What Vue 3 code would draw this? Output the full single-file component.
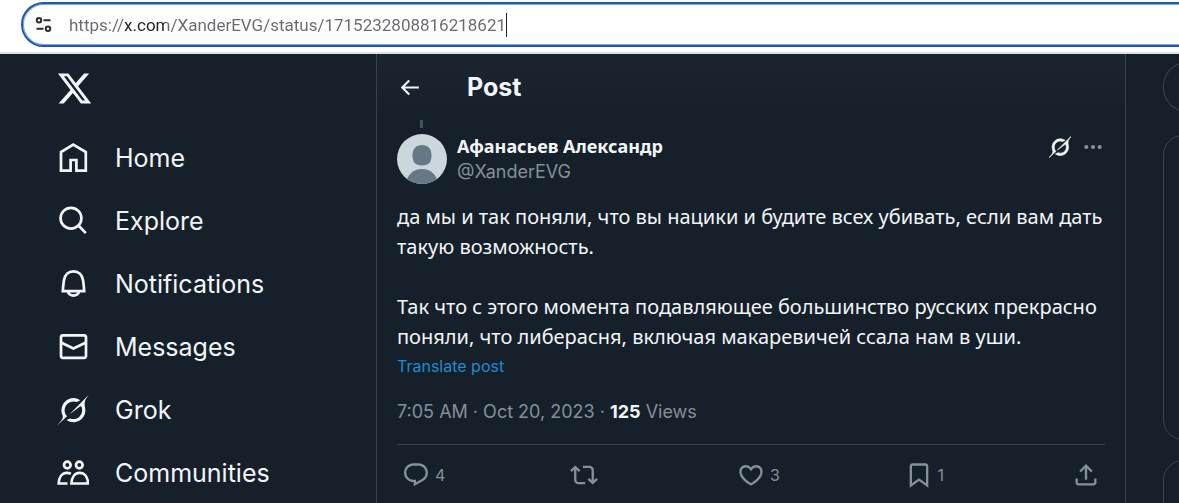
<script setup>
import { ref } from 'vue'

const url = ref('https://x.com/XanderEVG/status/1715232808816218621')

const nav = [
  { label: 'Home', icon: 'home' },
  { label: 'Explore', icon: 'search' },
  { label: 'Notifications', icon: 'bell' },
  { label: 'Messages', icon: 'mail' },
  { label: 'Grok', icon: 'grok' },
  { label: 'Communities', icon: 'people' },
]

const grokPath =
  'M12.745 20.54l10.97-8.19c.539-.4 1.307-.244 1.564.38 1.349 3.288.746 7.241-1.938 9.955-2.683 2.714-6.417 3.31-9.83 1.954l-3.728 1.745c5.347 3.697 11.84 2.782 15.898-1.324 3.219-3.255 4.216-7.692 3.284-11.693l.008.009c-1.351-5.878.332-8.227 3.782-13.031L33 0l-4.54 4.59v-.014L12.743 20.544m-2.263 1.987c-3.837-3.707-3.175-9.446.1-12.755 2.42-2.449 6.388-3.448 9.852-1.979l3.72-1.737c-.67-.49-1.53-1.017-2.515-1.387-4.455-1.854-9.789-.931-13.41 2.728-3.483 3.523-4.579 8.94-2.697 13.561 1.405 3.454-.899 5.898-3.22 8.364C1.49 30.2.666 31.074 0 32l10.478-9.466'

const actions = [
  {
    label: 'Reply',
    count: '4',
    path: 'M1.751 10c0-4.42 3.584-8 8.005-8h4.366c4.49 0 8.129 3.64 8.129 8.13 0 2.96-1.607 5.68-4.196 7.11l-8.054 4.46v-3.69h-.067c-4.49.1-8.183-3.51-8.183-8.01zm8.005-6c-3.317 0-6.005 2.69-6.005 6 0 3.37 2.77 6.08 6.138 6.01l.351-.01h1.761v2.3l5.087-2.81c1.951-1.08 3.163-3.13 3.163-5.36 0-3.39-2.744-6.13-6.129-6.13H9.756z',
  },
  {
    label: 'Repost',
    count: '',
    path: 'M4.5 3.88l4.432 4.14-1.364 1.46L5.5 7.55V16c0 1.1.896 2 2 2H13v2H7.5c-2.209 0-4-1.79-4-4V7.55L1.432 9.48.068 8.02 4.5 3.88zM16.5 6H11V4h5.5c2.209 0 4 1.79 4 4v8.45l2.068-1.93 1.364 1.46-4.432 4.14-4.432-4.14 1.364-1.46 2.068 1.93V8c0-1.1-.896-2-2-2z',
  },
  {
    label: 'Like',
    count: '3',
    path: 'M16.697 5.5c-1.222-.06-2.679.51-3.89 2.16l-.805 1.09-.806-1.09C9.984 6.01 8.526 5.44 7.304 5.5c-1.243.07-2.349.78-2.91 1.91-.552 1.12-.633 2.78.479 4.82 1.074 1.97 3.257 4.27 7.129 6.61 3.87-2.34 6.052-4.64 7.126-6.61 1.111-2.04 1.03-3.7.477-4.82-.561-1.13-1.666-1.84-2.908-1.91zm4.187 7.69c-1.351 2.48-4.001 5.12-8.379 7.67l-.503.3-.504-.3c-4.379-2.55-7.029-5.19-8.382-7.67-1.36-2.5-1.41-4.86-.514-6.67.887-1.79 2.647-2.91 4.601-3.01 1.651-.09 3.368.56 4.798 2.01 1.429-1.45 3.146-2.1 4.796-2.01 1.954.1 3.714 1.22 4.601 3.01.896 1.81.846 4.17-.514 6.67z',
  },
  {
    label: 'Bookmark',
    count: '1',
    path: 'M4 4.5C4 3.12 5.119 2 6.5 2h11C18.881 2 20 3.12 20 4.5v18.44l-8-5.71-8 5.71V4.5zM6.5 4c-.276 0-.5.22-.5.5v14.56l6-4.29 6 4.29V4.5c0-.28-.224-.5-.5-.5h-11z',
  },
  {
    label: 'Share',
    count: '',
    path: 'M12 2.59l5.7 5.7-1.41 1.42L13 6.41V16h-2V6.41l-3.3 3.3-1.41-1.42L12 2.59zM21 15l-.02 3.51c0 1.38-1.12 2.49-2.5 2.49H5.5C4.11 21 3 19.88 3 18.5V15h2v3.5c0 .28.22.5.5.5h12.98c.28 0 .5-.22.5-.5L19 15h2z',
  },
]
</script>

<template>
  <div class="window">
    <header class="toolbar">
      <div class="omnibox">
        <button class="site-info" type="button" aria-label="View site information">
          <svg width="18" height="18" viewBox="0 0 18 18" fill="none" stroke="#2b2d30" stroke-width="2">
            <circle cx="4" cy="4.3" r="2.2" />
            <path d="M8.5 4.3h7M1.5 12.7h7" />
            <circle cx="13" cy="12.7" r="2.2" />
          </svg>
        </button>
        <input v-model="url" class="url" type="text" aria-label="Address bar" spellcheck="false" />
        <span class="caret"></span>
      </div>
    </header>

    <div class="page">
      <nav class="sidebar" aria-label="Primary">
        <a class="logo" href="#" aria-label="X">
          <svg width="37" height="37" viewBox="0 0 24 24" fill="currentColor">
            <path d="M18.244 2.25h3.308l-7.227 8.26 8.502 11.24H16.17l-5.214-6.817L4.99 21.75H1.68l7.73-8.835L1.254 2.25H8.08l4.713 6.231zm-1.161 17.52h1.833L7.084 4.126H5.117z" />
          </svg>
        </a>
        <a v-for="item in nav" :key="item.label" class="nav-item" href="#">
          <svg v-if="item.icon === 'grok'" width="32" height="32" viewBox="0 0 33 32" fill="currentColor">
            <path :d="grokPath" />
          </svg>
          <svg v-else class="line" width="32" height="32" viewBox="0 0 32 32">
            <path v-if="item.icon === 'home'" d="M16.3 2.6L28.8 10v18.7h-9.4V18h-5.8v10.7H4V10z" />
            <template v-else-if="item.icon === 'search'">
              <circle cx="14" cy="13.2" r="10.4" />
              <path d="M21.5 20.5l7.3 7.6" />
            </template>
            <template v-else-if="item.icon === 'bell'">
              <path d="M5.8 23.2h21.4c-.2-4-.6-7.2-1.1-10.7-.8-5.5-4.5-9.2-9.6-9.2S7.7 7 6.9 12.5c-.5 3.5-.9 6.7-1.1 10.7z" />
              <path d="M11 23.5c.4 2.5 2.8 4.2 5.5 4.2s5.1-1.7 5.5-4.2" />
            </template>
            <template v-else-if="item.icon === 'mail'">
              <rect x="4" y="4.3" width="25" height="22.5" rx="2" />
              <path d="M4 11.5l12.4 6L29 11.5" />
            </template>
            <template v-else>
              <circle cx="10.3" cy="8" r="3.3" />
              <circle cx="22.3" cy="8" r="3.3" />
              <path d="M14.5 26.5H31c-.2-6.5-3.5-10.7-8.3-10.7s-8 4.2-8.2 10.7z" />
              <path d="M10.5 26.5H1.7c.2-6.5 3.5-10.7 8.2-10.7 1.5 0 2.8.3 3.9 1" />
            </template>
          </svg>
          <span>{{ item.label }}</span>
        </a>
      </nav>

      <main class="column">
        <div class="column-head">
          <button class="back" type="button" aria-label="Back">
            <svg width="25" height="25" viewBox="0 0 24 24" fill="currentColor">
              <path d="M7.414 13l5.043 5.04-1.414 1.42L3.586 12l7.457-7.46 1.414 1.42L7.414 11H21v2H7.414z" />
            </svg>
          </button>
          <h1>Post</h1>
        </div>

        <article class="post">
          <div class="thread-line"></div>
          <div class="author">
            <svg class="avatar" width="50" height="50" viewBox="0 0 50 50" aria-hidden="true">
              <rect width="50" height="50" fill="#ccd6dd" />
              <path d="M25 11c6 0 9.5 4 9.5 10.5S32 31.5 25 31.5s-9.5-3.5-9.5-10S19 11 25 11z" fill="#667788" />
              <path d="M9 50c1-9 7-15 16-15s15 6 16 15z" fill="#667788" />
            </svg>
            <div class="names">
              <a class="name" href="#">Афанасьев Александр</a>
              <a class="handle" href="#">@XanderEVG</a>
            </div>
            <div class="tools">
              <button class="grok" type="button" aria-label="Explain this post">
                <svg width="22" height="22" viewBox="0 0 33 32" fill="currentColor" stroke="currentColor" stroke-width="1"><path :d="grokPath" /></svg>
              </button>
              <button type="button" aria-label="More">
                <svg width="24" height="24" viewBox="0 0 24 24" fill="currentColor">
                  <circle cx="5.3" cy="12" r="2.1" />
                  <circle cx="12" cy="12" r="2.1" />
                  <circle cx="18.7" cy="12" r="2.1" />
                </svg>
              </button>
            </div>
          </div>

          <div class="body">
            <p>да мы и так поняли, что вы нацики и будите всех убивать, если вам дать такую возможность.</p>
            <p>Так что с этого момента подавляющее большинство русских прекрасно поняли, что либерасня, включая макаревичей ссала нам в уши.</p>
          </div>
          <button class="translate" type="button">Translate post</button>
          <div class="meta">7:05 AM · Oct 20, 2023 · <strong>125</strong> Views</div>

          <div class="actions">
            <button v-for="a in actions" :key="a.label" type="button" :aria-label="a.label">
              <svg width="28" height="28" viewBox="0 0 24 24" fill="currentColor"><path :d="a.path" /></svg>
              <span v-if="a.count">{{ a.count }}</span>
            </button>
          </div>
        </article>
      </main>

      <aside class="rail">
        <div class="card pill"></div>
        <div class="card"></div>
        <div class="card"></div>
      </aside>
    </div>
  </div>
</template>

<style>
body {
  margin: 0;
  background: #16202a;
}
</style>

<style scoped>
.window {
  display: flex;
  flex-direction: column;
  height: 100vh;
  overflow: hidden;
  background: #16202a;
  color: #f2f5f7;
  font-family: Inter, "Liberation Sans", sans-serif;
}

button {
  display: flex;
  align-items: center;
  padding: 0;
  border: 0;
  background: none;
  color: inherit;
  font: inherit;
}

a {
  color: inherit;
  text-decoration: none;
}

svg {
  display: block;
  flex: none;
}

.toolbar {
  flex: none;
  padding: 2px 0 5px 21px;
  overflow: hidden;
  background: #fff;
  border-bottom: 2px solid #dce1e6;
}

.omnibox {
  display: flex;
  align-items: center;
  box-sizing: border-box;
  height: 45px;
  margin-right: -8px;
  padding-left: 10px;
  border: 2px solid #1b58b8;
  border-radius: 23px 0 0 23px;
  box-shadow: inset 0 0 0 1px #7da7e8;
}

.site-info {
  width: 36px;
  padding-left: 2px;
  box-sizing: border-box;
}

.url {
  field-sizing: content;
  padding: 0;
  border: 0;
  outline: 0;
  background: linear-gradient(90deg, #66696d 54px, #202124 54px, #202124 97px, #66696d 97px);
  background-clip: text;
  color: transparent;
  font-family: Roboto, "Noto Sans", sans-serif;
  font-size: 17px;
  line-height: 28px;
}

.caret {
  width: 1px;
  height: 24px;
  background: #202124;
}

.page {
  display: grid;
  grid-template-columns: 376px minmax(0, 1fr) 53px;
  flex: 1;
  min-height: 0;
}

.sidebar {
  padding: 16px 0 0 56px;
}

.logo {
  display: block;
  height: 56px;
}

.nav-item {
  display: flex;
  align-items: center;
  gap: 26px;
  height: 63px;
  padding-left: 1px;
  font-size: 25px;
}

.line {
  fill: none;
  stroke: currentColor;
  stroke-width: 2.7;
}

.column {
  border: solid #38444d;
  border-width: 0 1px;
}

.column-head {
  display: flex;
  align-items: center;
  height: 66px;
  padding: 0 20px;
  background: linear-gradient(#1a2530, #16202a);
}

.back {
  width: 70px;
}

h1 {
  margin: 0;
  font-size: 25px;
  font-weight: 700;
}

.post {
  padding: 0 20px;
}

.thread-line {
  width: 3px;
  height: 8px;
  margin: 0 0 6px 23px;
  background: #425260;
}

.author {
  display: flex;
  gap: 10px;
}

.avatar {
  border-radius: 50%;
}

.names {
  display: flex;
  flex: 1;
  flex-direction: column;
  font-size: 18px;
  line-height: 25px;
}

.name {
  font-family: "Noto Sans", "Open Sans", sans-serif;
  font-weight: 700;
}

.handle,
.meta,
.actions,
.tools {
  color: #84909b;
}

.tools {
  display: flex;
  align-items: center;
  gap: 10px;
  height: 25px;
}

.grok {
  color: #f2f5f7;
}

.body {
  display: grid;
  gap: 30px;
  margin-top: 18px;
  font-family: "Noto Sans", "Open Sans", sans-serif;
  font-size: 20px;
  line-height: 30px;
}

.body p {
  margin: 0;
}

.translate {
  height: 28px;
  color: #1d8bd1;
  font-size: 16px;
}

.meta {
  margin-top: 19px;
  font-size: 18px;
  line-height: 26px;
}

.meta strong {
  color: #f2f5f7;
}

.actions {
  display: flex;
  margin-top: 19px;
  padding: 16px 5px;
  border-top: 1px solid #38444d;
  font-size: 16px;
}

.actions button {
  flex: 1;
  gap: 5px;
}

.actions button:last-child {
  flex: none;
}

.rail {
  display: flex;
  flex-direction: column;
  padding: 8px 0 0 37px;
  overflow: hidden;
}

.card {
  flex: none;
  box-sizing: border-box;
  height: 305px;
  margin-right: -8px;
  margin-bottom: 20px;
  border: 1px solid #38444d;
  border-radius: 20px 0 0 20px;
}

.pill {
  height: 50px;
  margin-bottom: 23px;
  border-radius: 25px 0 0 25px;
}
</style>
